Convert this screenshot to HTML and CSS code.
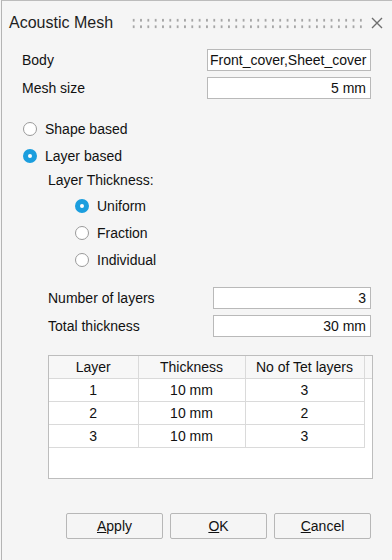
FILE: index.html
```html
<!DOCTYPE html>
<html lang="en">
<head>
    <meta charset="UTF-8">
    <meta name="viewport" content="width=device-width, initial-scale=1.0">
    <title>Acoustic Mesh</title>
    <link rel="stylesheet" href="styles.css">
</head>
<body>
    <div id="dialog">
        <div class="titleBar">
            <span class="title">Acoustic Mesh</span>
            <span class="grip"></span>
            <svg class="closeBtn" width="12" height="12" viewBox="0 0 12 12">
                <path d="M1 1 L11 11 M11 1 L1 11" stroke="#6e6e6e" stroke-width="1.4" fill="none"/>
            </svg>
        </div>

        <div class="field bodyRow">
            <span>Body</span>
            <div class="textBox wide">Front_cover,Sheet_cover</div>
        </div>
        <div class="field meshRow">
            <span>Mesh size</span>
            <div class="textBox wide right">5 mm</div>
        </div>

        <div class="radios top">
            <label class="radio"><span class="dot"></span>Shape based</label>
            <label class="radio"><span class="dot checked"></span>Layer based</label>
        </div>
        <div class="subLabel">Layer Thickness:</div>
        <div class="radios sub">
            <label class="radio"><span class="dot checked"></span>Uniform</label>
            <label class="radio"><span class="dot"></span>Fraction</label>
            <label class="radio"><span class="dot"></span>Individual</label>
        </div>

        <div class="field subField layersRow">
            <span>Number of layers</span>
            <div class="textBox narrow right">3</div>
        </div>
        <div class="field subField thickRow">
            <span>Total thickness</span>
            <div class="textBox narrow right">30 mm</div>
        </div>

        <div id="layerGrid">
            <table>
                <thead>
                    <tr>
                        <th class="c1">Layer</th>
                        <th class="c2">Thickness</th>
                        <th class="c3">No of Tet layers</th>
                        <th class="filler"></th>
                    </tr>
                </thead>
                <tbody id="layerRows"></tbody>
            </table>
        </div>

        <div class="buttons">
            <button><u>A</u>pply</button>
            <button><u>O</u>K</button>
            <button><u>C</u>ancel</button>
        </div>
    </div>

    <script>
        const layers = [
            { thickness: '10 mm', tets: 3 },
            { thickness: '10 mm', tets: 2 },
            { thickness: '10 mm', tets: 3 }
        ];

        const rows = document.getElementById('layerRows');
        layers.forEach((layer, index) => {
            const tr = document.createElement('tr');
            tr.innerHTML = `
                <td>${index + 1}</td>
                <td>${layer.thickness}</td>
                <td>${layer.tets}</td>
            `;
            rows.appendChild(tr);
        });
    </script>
</body>
</html>
```

FILE: styles.css
```css
body {
    margin: 0;
    background-color: #f5f5f5;
    font-family: "Liberation Sans", Arial, sans-serif;
    font-size: 14px;
    color: #111;
}
#dialog {
    margin-left: 1px;
    height: 559px;
    border-top: 1px solid #bcbcbc;
    border-left: 1px solid #b4b4b4;
    background-color: #f5f5f5;
}
.titleBar {
    display: flex;
    align-items: center;
    box-sizing: border-box;
    height: 41px;
    padding-top: 2px;
    padding-left: 7px;
    padding-right: 9px;
}
.title {
    font-size: 16px;
    color: #1e1e1e;
}
.grip {
    flex: 1;
    height: 13px;
    margin-left: 17px;
    margin-right: 8px;
    margin-top: 1px;
    background-image: radial-gradient(circle, #a2a2a2 1px, transparent 1.3px);
    background-size: 7.33px 6.5px;
}
.field {
    display: flex;
    align-items: center;
    justify-content: space-between;
    height: 22px;
    margin-left: 20px;
    margin-right: 21px;
}
.bodyRow {
    margin-top: 7px;
}
.meshRow {
    margin-top: 6px;
}
.textBox {
    box-sizing: border-box;
    height: 22px;
    line-height: 20px;
    padding: 0 2px 0 2px;
    background-color: white;
    border: 1px solid #b9b9b9;
    white-space: nowrap;
    overflow: hidden;
}
.wide {
    width: 164px;
}
.narrow {
    width: 158px;
}
.right {
    text-align: right;
    padding-right: 4px;
}
.radios {
    display: flex;
    flex-direction: column;
}
.radios.top {
    margin-top: 16px;
    margin-left: 21px;
}
.radios.sub {
    margin-left: 73px;
}
.radio {
    display: flex;
    align-items: center;
    height: 27px;
}
.dot {
    box-sizing: border-box;
    width: 14px;
    height: 14px;
    margin-right: 8px;
    border-radius: 50%;
    border: 1px solid #9a9a9a;
    background-color: white;
}
.dot.checked {
    border: 5px solid #1b9ede;
    background-color: white;
}
.subLabel {
    height: 23px;
    line-height: 23px;
    margin-left: 46px;
}
.subField {
    margin-left: 46px;
}
.layersRow {
    margin-top: 14px;
}
.thickRow {
    margin-top: 6px;
}
#layerGrid {
    box-sizing: border-box;
    height: 124px;
    margin-top: 18px;
    margin-left: 46px;
    margin-right: 19px;
    background-color: white;
    border: 1px solid #bdbdbd;
}
table {
    border-collapse: collapse;
    table-layout: fixed;
}
th,
td {
    box-sizing: border-box;
    height: 23px;
    padding: 0;
    text-align: center;
    font-weight: normal;
    border-right: 1px solid #dadada;
    border-bottom: 1px solid #dadada;
    white-space: nowrap;
}
th {
    height: 22px;
    background-color: #f7f7f7;
}
.c1 {
    width: 89px;
}
.c2 {
    width: 107px;
}
.c3 {
    width: 119px;
}
th.filler {
    width: 8px;
    border-right: none;
}
.buttons {
    display: flex;
    justify-content: flex-end;
    gap: 7px;
    margin-top: 34px;
    margin-right: 21px;
}
button {
    width: 97px;
    height: 26px;
    padding: 0;
    font-family: "Liberation Sans", Arial, sans-serif;
    font-size: 14px;
    color: #111;
    background-color: #f5f5f5;
    border: 1px solid #b7b7b7;
    border-radius: 2px;
}
```
